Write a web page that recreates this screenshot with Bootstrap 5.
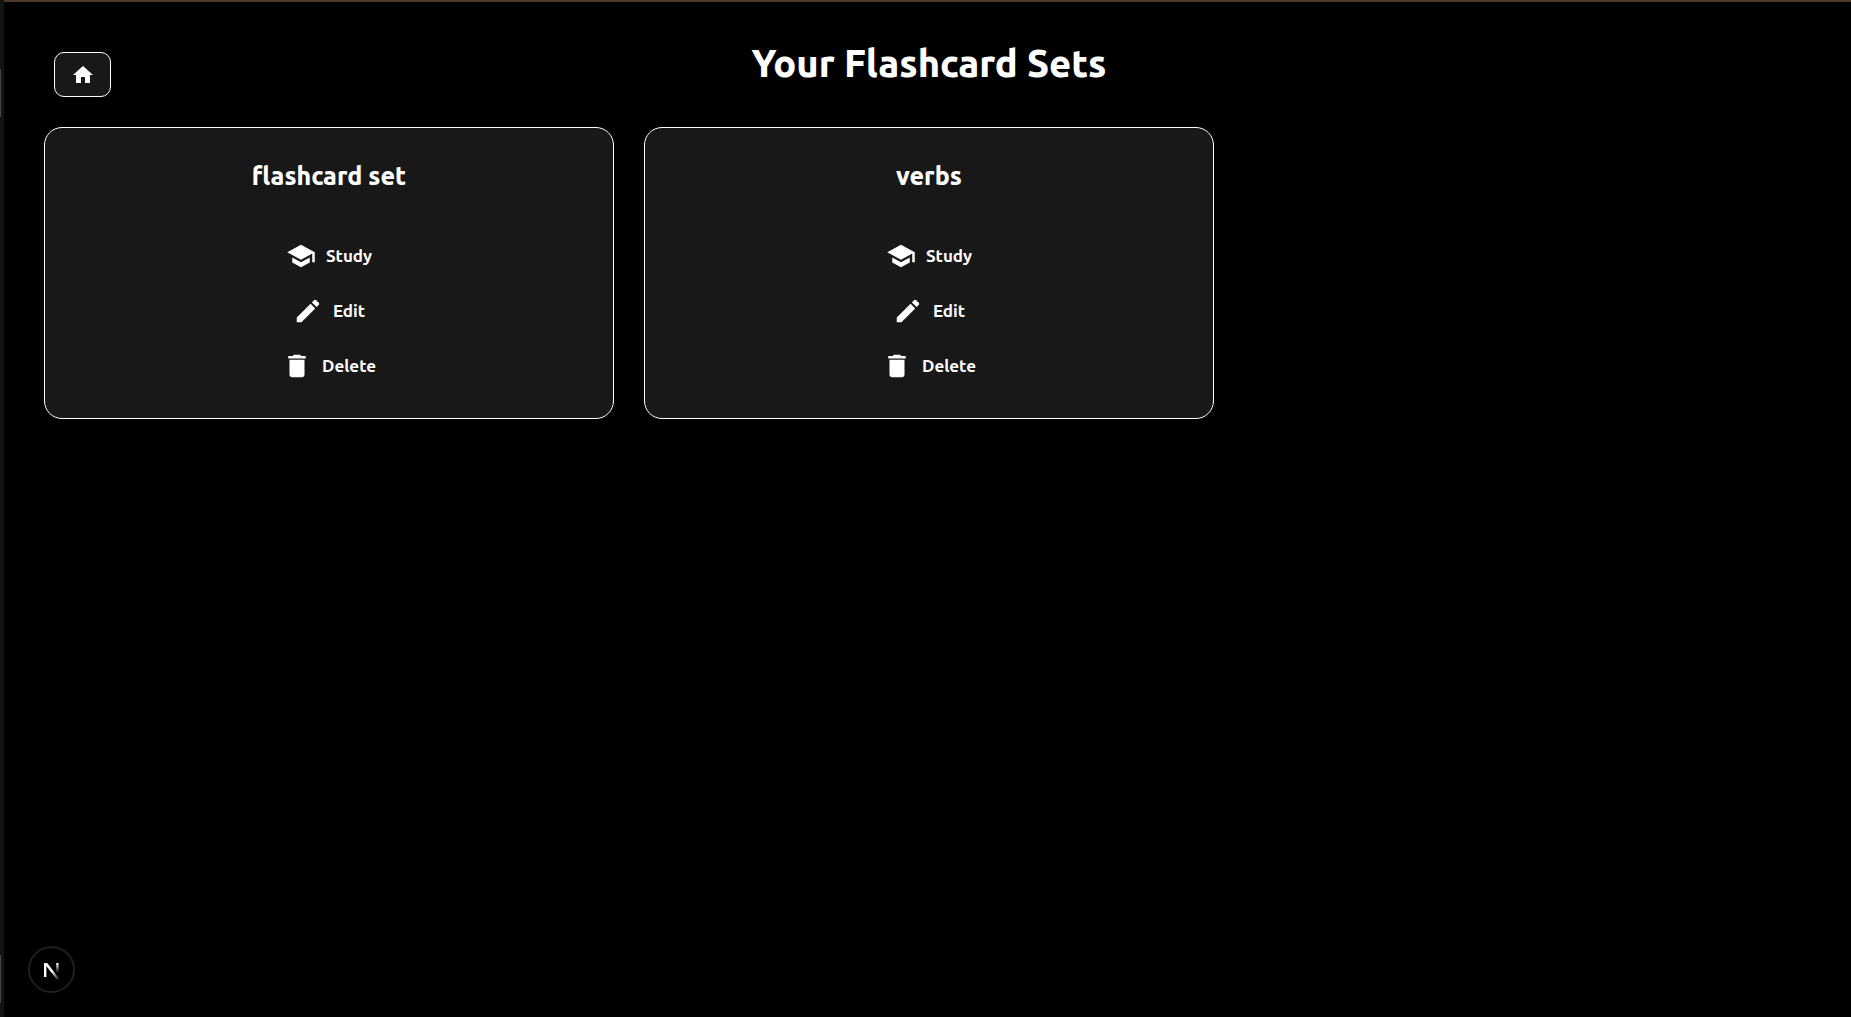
<!DOCTYPE html>
<html lang="en" data-bs-theme="dark">
<head>
<meta charset="utf-8">
<meta name="viewport" content="width=device-width, initial-scale=1">
<title>Your Flashcard Sets</title>
<link href="https://cdn.jsdelivr.net/npm/bootstrap@5.3.0/dist/css/bootstrap.min.css" rel="stylesheet">
<style>
  body { background: #000; color: #fff; font-family: Ubuntu, "Noto Sans", sans-serif; }
  .dock-edge { width: 4px; background: #141414; }
  .dock-mark { left: 0; width: 1px; height: 48px; background: #444; }
  .dock-mark-top { top: 69px; }
  .dock-mark-bottom { bottom: 14px; }
  .page-main { border-top: 2px solid #4f3825; padding: 38px 37px 40px 40px; }
  .page-title { font-size: 38px; line-height: 46px; margin-bottom: 41px; font-weight: 800; }
  .home-btn { top: 12px; left: 10px; width: 57px; height: 45px; border: 1px solid #fff; border-radius: 10px; background: #181818; }
  .set-grid { --bs-gutter-x: 30px; --bs-gutter-y: 30px; }
  .set-card { background: #181818; border: 1px solid #fff; border-radius: 18px; padding: 30px 20px 25px; }
  .set-name { font-size: 25px; line-height: 36px; font-weight: 800; margin-bottom: 34px; }
  .set-action { height: 55px; gap: 10px; font-size: 17px; line-height: 24px; font-weight: 600; color: #fff; border: 0; border-radius: 8px; }
  .dev-badge { left: 28px; bottom: 24px; width: 47px; height: 47px; border: 2px solid #1f1f1f; background: #000; }
</style>
<script src="https://cdn.jsdelivr.net/npm/bootstrap@5.3.0/dist/js/bootstrap.bundle.min.js" defer></script>
</head>
<body>
<svg class="d-none" aria-hidden="true">
  <symbol id="i-home" viewBox="0 0 24 24"><path d="M10 20v-6h4v6h5v-8h3L12 3 2 12h3v8z"/></symbol>
  <symbol id="i-study" viewBox="0 0 24 24"><path d="M5 13.18v4L12 21l7-3.82v-4L12 17l-7-3.82zM12 3 1 9l11 6 9-4.91V17h2V9L12 3z"/></symbol>
  <symbol id="i-edit" viewBox="0 0 24 24"><path d="M3 17.25V21h3.75L17.81 9.94l-3.75-3.75L3 17.25zM20.71 7.04a1 1 0 0 0 0-1.41l-2.34-2.34a1 1 0 0 0-1.41 0l-1.83 1.83 3.75 3.75 1.83-1.83z"/></symbol>
  <symbol id="i-delete" viewBox="0 0 24 24"><path d="M6 19c0 1.1.9 2 2 2h8c1.1 0 2-.9 2-2V7H6v12zM19 4h-3.5l-1-1h-5l-1 1H5v2h14V4z"/></symbol>
</svg>

<div class="d-flex min-vh-100">
  <div class="dock-edge flex-shrink-0" aria-hidden="true">
    <span class="dock-mark dock-mark-top position-absolute"></span>
    <span class="dock-mark dock-mark-bottom position-fixed"></span>
  </div>
  <main class="page-main flex-grow-1">
    <header class="position-relative text-center">
      <a href="#" class="home-btn position-absolute d-flex align-items-center justify-content-center text-white" aria-label="Home">
        <svg width="24" height="24" fill="currentColor" aria-hidden="true"><use href="#i-home"/></svg>
      </a>
      <h1 class="page-title">Your Flashcard Sets</h1>
    </header>

    <div class="set-grid row row-cols-1 row-cols-md-2 row-cols-lg-3">
      <div class="col">
        <section class="set-card text-center">
          <h2 class="set-name">flashcard set</h2>
          <div class="d-flex flex-column align-items-center">
            <button type="button" class="set-action btn d-flex align-items-center p-0"><svg width="30" height="30" fill="currentColor" aria-hidden="true"><use href="#i-study"/></svg>Study</button>
            <button type="button" class="set-action btn d-flex align-items-center p-0"><svg width="30" height="30" fill="currentColor" aria-hidden="true"><use href="#i-edit"/></svg>Edit</button>
            <button type="button" class="set-action btn d-flex align-items-center p-0"><svg width="30" height="30" fill="currentColor" aria-hidden="true"><use href="#i-delete"/></svg>Delete</button>
          </div>
        </section>
      </div>
      <div class="col">
        <section class="set-card text-center">
          <h2 class="set-name">verbs</h2>
          <div class="d-flex flex-column align-items-center">
            <button type="button" class="set-action btn d-flex align-items-center p-0"><svg width="30" height="30" fill="currentColor" aria-hidden="true"><use href="#i-study"/></svg>Study</button>
            <button type="button" class="set-action btn d-flex align-items-center p-0"><svg width="30" height="30" fill="currentColor" aria-hidden="true"><use href="#i-edit"/></svg>Edit</button>
            <button type="button" class="set-action btn d-flex align-items-center p-0"><svg width="30" height="30" fill="currentColor" aria-hidden="true"><use href="#i-delete"/></svg>Delete</button>
          </div>
        </section>
      </div>
    </div>
  </main>
</div>

<button type="button" class="dev-badge position-fixed rounded-circle p-0 d-flex align-items-center justify-content-center" aria-label="Open Next.js dev tools">
  <svg width="43" height="43" viewBox="0 0 43 43" fill="none" aria-hidden="true">
    <defs>
      <linearGradient id="n-diag" gradientUnits="userSpaceOnUse" x1="22" y1="23" x2="29" y2="31"><stop stop-color="#fff"/><stop offset="1" stop-color="#fff" stop-opacity="0.1"/></linearGradient>
      <linearGradient id="n-bar" gradientUnits="userSpaceOnUse" x1="27" y1="15" x2="27" y2="25"><stop stop-color="#fff"/><stop offset="1" stop-color="#fff" stop-opacity="0"/></linearGradient>
    </defs>
    <path d="M15.2 29V15" stroke="#fff" stroke-width="2.4"/>
    <path d="M14 15h3.2l12.2 16-2 1.2z" fill="url(#n-diag)"/>
    <path d="M27.4 15v10" stroke="url(#n-bar)" stroke-width="2.4"/>
  </svg>
</button>
</body>
</html>
